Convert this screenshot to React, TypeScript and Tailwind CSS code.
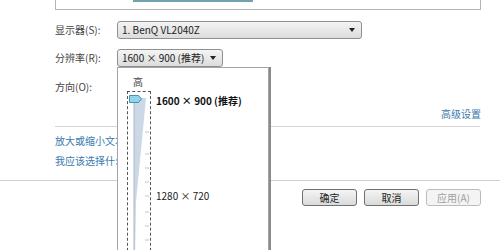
function Select({ text, width }: { text: string; width: string }) {
  return (
    <div
      className={`${width} h-[18px] flex items-center justify-between pl-[4px] pr-[6px] border border-[#8e8f8f] rounded-[3px] bg-gradient-to-b from-[#f4f4f4] to-[#dcdcdc] text-[#222] whitespace-nowrap`}
    >
      <span className="leading-none">{text}</span>
      <span className="w-0 h-0 border-x-[3px] border-x-transparent border-t-[4px] border-t-[#222]" />
    </div>
  )
}

function Button({ label, disabled }: { label: string; disabled?: boolean }) {
  return (
    <div
      className={`w-[55px] h-[17px] flex items-center justify-center rounded-[3px] border ${
        disabled
          ? 'border-[#bcbcbc] bg-[#f4f4f4] text-[#a0a0a0]'
          : 'border-[#707070] bg-gradient-to-b from-[#f5f5f5] to-[#dadada] text-[#222]'
      }`}
    >
      {label}
    </div>
  )
}

export default function App() {
  return (
    <div className="relative w-[500px] h-[250px] overflow-hidden bg-white text-[10px] text-[#444] font-['Noto_Sans_CJK_SC','Liberation_Sans',sans-serif] leading-none">
      {/* top preview box */}
      <div className="ml-[55px] w-[426px] h-[10px] border-x border-b border-[#b4b4b4]">
        <div className="ml-[77px] w-[120px] h-[2px] bg-[#6fa3ad]" />
      </div>

      <div className="mt-[11px] flex items-center">
        <span className="ml-[55px] w-[62px]">显示器(S):</span>
        <Select text="1. BenQ VL2040Z" width="w-[245px]" />
      </div>

      <div className="mt-[10px] flex items-center">
        <span className="ml-[55px] w-[62px]">分辨率(R):</span>
        <Select text="1600 × 900 (推荐)" width="w-[106px]" />
      </div>

      <div className="mt-[13px] ml-[55px] h-[14px] flex items-center">方向(O):</div>

      <div className="mt-[15px] ml-[55px] w-[426px] flex justify-end text-[#3a78ad]">
        <span>高级设置</span>
      </div>

      <div className="mt-[7px] ml-[55px] w-[425px] h-px bg-[#d4d4d4]" />

      <div className="mt-[9px] ml-[55px] flex flex-col gap-[10px] text-[#3a78ad]">
        <span>放大或缩小文本和其他项目</span>
        <span>我应该选择什么显示器设置?</span>
      </div>

      <div className="mt-[14px] w-full h-px bg-[#cfcfcf]" />

      <div className="mt-[8px] ml-[302px] flex gap-[7px]">
        <Button label="确定" />
        <Button label="取消" />
        <Button label="应用(A)" disabled />
      </div>

      {/* resolution dropdown popup */}
      <div className="absolute left-[117px] top-[67px] w-[152px] h-[190px] bg-white border border-[#a5a5a5] shadow-[2px_0_0_#8a8a8a]">
        <span className="absolute left-[15px] top-[9px] text-[10px] text-[#444]">高</span>
        <div className="absolute left-[9px] top-[23px] w-[24px] h-[170px] border border-dashed border-[#555]">
          <svg width="24" height="170" viewBox="0 0 24 170" className="block">
            <polygon points="6,6 18,6 8,110 7,170 6,170" fill="#cdd8e6" />
            <line x1="6" y1="6" x2="6" y2="170" stroke="#a9b7c7" strokeWidth="1" />
            {[40, 62, 76, 90, 104, 120, 134, 148].map((y) => (
              <line key={y} x1="17" y1={y} x2="21" y2={y} stroke="#c4c4c4" strokeWidth="1" />
            ))}
            <path d="M1.5 3.5 h9 l3 3.5 l-3 3.5 h-9 z" fill="#8fd6ec" stroke="#4a90b0" strokeWidth="1" />
          </svg>
        </div>
        <span className="absolute left-[38px] top-[28px] text-[10px] font-bold text-[#111] whitespace-nowrap">1600 × 900 (推荐)</span>
        <span className="absolute left-[38px] top-[123px] text-[10px] text-[#222] whitespace-nowrap">1280 × 720</span>
      </div>
    </div>
  )
}
